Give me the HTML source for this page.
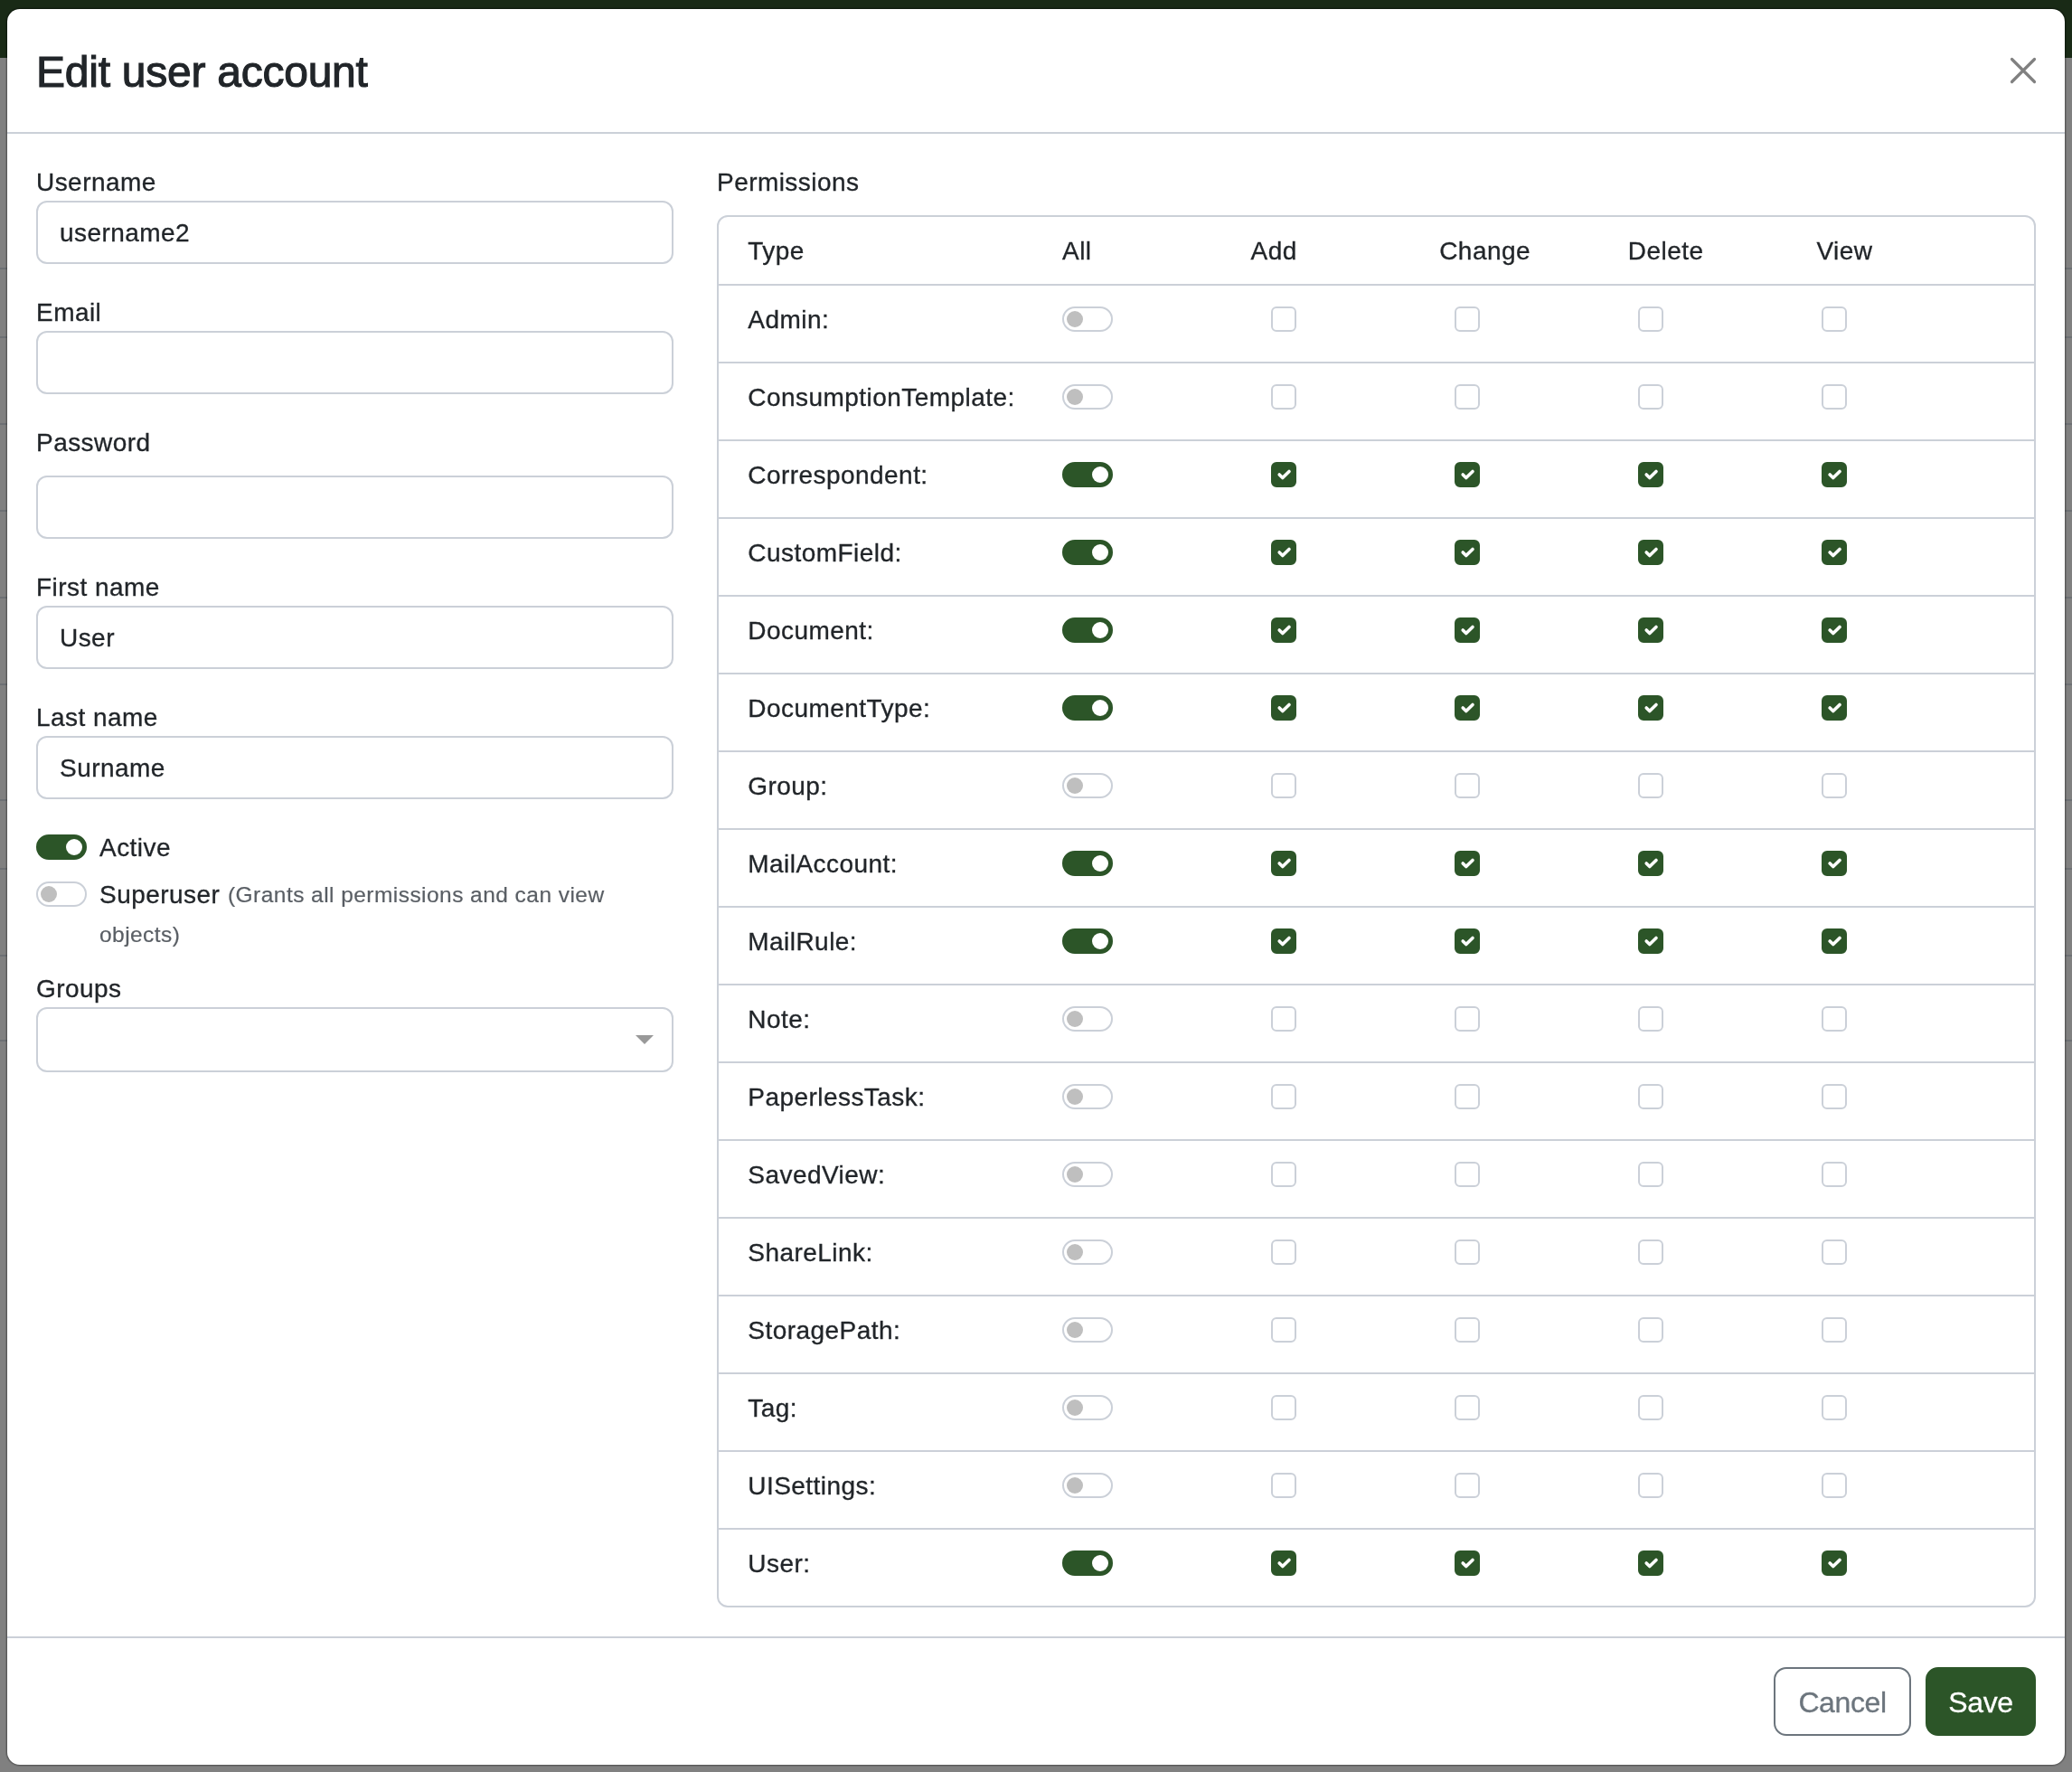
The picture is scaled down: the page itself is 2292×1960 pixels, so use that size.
<!DOCTYPE html>
<html><head><meta charset="utf-8"><style>
html,body{margin:0;padding:0;}
body{width:2292px;height:1960px;position:relative;overflow:hidden;background:#808080;font-family:"Liberation Sans", sans-serif;color:#212529;}
.top{position:absolute;left:0;top:0;width:2292px;height:64px;background:#192a16;}
.gl{position:absolute;left:0;width:2292px;height:2px;background:#6d7074;}
.modal{position:absolute;left:7px;top:9px;width:2276px;height:1942px;border:1px solid rgba(0,0,0,.2);box-shadow:0 0 0 1px rgba(0,0,0,.12);border-radius:15px;background:#fff;background-clip:padding-box;}
.abs{position:absolute;}
.t{position:absolute;font-size:28px;line-height:42px;white-space:nowrap;letter-spacing:.45px;margin-top:1px;-webkit-text-stroke:.3px #212529;}
.sm{position:absolute;font-size:24.5px;line-height:42px;white-space:nowrap;color:#595e64;letter-spacing:.45px;margin-top:.5px;-webkit-text-stroke-width:.2px;}
.title{position:absolute;font-size:48px;line-height:72px;white-space:nowrap;-webkit-text-stroke:1.1px #212529;letter-spacing:-.25px;}
.inp{position:absolute;left:40px;width:705px;height:70px;box-sizing:border-box;border:2px solid #cbd0d8;border-radius:12px;background:#fff;}
.card{box-sizing:border-box;border:2px solid #cbd0d8;border-radius:12px;}
.sw{position:absolute;width:56px;height:28px;box-sizing:border-box;border:2px solid #cbd0d8;border-radius:14px;background:#fff;}
.sw i{position:absolute;left:3px;top:3px;width:18px;height:18px;border-radius:50%;background:#bfbfbf;}
.sw.on{background:#2c5528;border-color:#2c5528;}
.sw.on i{left:auto;right:3px;background:#fff;}
.cb{position:absolute;width:28px;height:28px;box-sizing:border-box;border:2px solid #cbd0d8;border-radius:6px;background:#fff;}
.cb.on{background:#2c5528;border-color:#2c5528;}
.cb svg{position:absolute;left:0;top:0;}
.btn{position:absolute;height:76px;box-sizing:border-box;border:2px solid;border-radius:14px;font-size:32px;line-height:75px;text-align:center;white-space:nowrap;letter-spacing:-.4px;-webkit-text-stroke-width:.3px;}
.cancel{border-color:#6c757d;color:#6c757d;background:#fff;}
.save{border-color:#2c5528;background:#2c5528;color:#fff;}
</style></head><body>
<div class="top"></div>
<div class="gl" style="top:296px"></div><div class="gl" style="top:372px"></div><div class="gl" style="top:468px"></div><div class="gl" style="top:564px"></div><div class="gl" style="top:660px"></div><div class="gl" style="top:756px"></div><div class="gl" style="top:884px"></div><div class="gl" style="top:960px"></div><div class="gl" style="top:1056px"></div><div class="gl" style="top:1150px"></div>
<div class="modal"></div>
<div id="c" style="position:absolute;left:0;top:0;width:2292px;height:1960px;will-change:transform;"><div class="title" style="left:40px;top:43.5px">Edit user account</div><svg class="abs" style="left:2220px;top:60px" width="36" height="36" viewBox="0 0 36 36"><path d="M5.5 5.5 L30.5 30.5 M30.5 5.5 L5.5 30.5" stroke="#808080" stroke-width="3.2" stroke-linecap="round" fill="none"/></svg><div class="abs" style="left:8px;top:146px;width:2276px;height:2px;background:#cbd0d8"></div><div class="t" style="left:40px;top:180px;">Username</div><div class="t" style="left:40px;top:324px;">Email</div><div class="t" style="left:40px;top:468px;">Password</div><div class="t" style="left:40px;top:628px;">First name</div><div class="t" style="left:40px;top:772px;">Last name</div><div class="t" style="left:40px;top:1072px;">Groups</div><div class="inp" style="top:222px"></div><div class="t" style="left:66px;top:236px;">username2</div><div class="inp" style="top:366px"></div><div class="inp" style="top:526px"></div><div class="inp" style="top:670px"></div><div class="t" style="left:66px;top:684px;">User</div><div class="inp" style="top:814px"></div><div class="t" style="left:66px;top:828px;">Surname</div><div class="inp" style="top:1114px;height:72px"></div><svg class="abs" style="left:703px;top:1145px" width="20" height="10" viewBox="0 0 20 10"><path d="M0 0 L20 0 L10 10 Z" fill="#999"/></svg><div class="sw on" style="left:40px;top:923px"><i></i></div><div class="t" style="left:110px;top:916px;">Active</div><div class="sw" style="left:40px;top:975px"><i></i></div><div class="t" style="left:110px;top:968px;">Superuser</div><div class="sm" style="left:252px;top:968px">(Grants all permissions and can view</div><div class="sm" style="left:110px;top:1012px">objects)</div><div class="t" style="left:793px;top:180px;">Permissions</div><div class="abs card" style="left:793px;top:238px;width:1459px;height:1540px"></div><div class="t" style="left:827.3px;top:256px;">Type</div><div class="t" style="left:1175px;top:256px;">All</div><div class="t" style="left:1383.6px;top:256px;">Add</div><div class="t" style="left:1592.2px;top:256px;">Change</div><div class="t" style="left:1800.8px;top:256px;">Delete</div><div class="t" style="left:2009.4px;top:256px;">View</div><div class="abs" style="left:795px;top:314px;width:1455px;height:2px;background:#cbd0d8"></div><div class="t" style="left:827.3px;top:332px;">Admin:</div><div class="sw" style="left:1175px;top:339px"><i></i></div><div class="cb" style="left:1406px;top:339px"></div><div class="cb" style="left:1609px;top:339px"></div><div class="cb" style="left:1812px;top:339px"></div><div class="cb" style="left:2015px;top:339px"></div><div class="abs" style="left:795px;top:400px;width:1455px;height:2px;background:#cbd0d8"></div><div class="t" style="left:827.3px;top:418px;">ConsumptionTemplate:</div><div class="sw" style="left:1175px;top:425px"><i></i></div><div class="cb" style="left:1406px;top:425px"></div><div class="cb" style="left:1609px;top:425px"></div><div class="cb" style="left:1812px;top:425px"></div><div class="cb" style="left:2015px;top:425px"></div><div class="abs" style="left:795px;top:486px;width:1455px;height:2px;background:#cbd0d8"></div><div class="t" style="left:827.3px;top:504px;">Correspondent:</div><div class="sw on" style="left:1175px;top:511px"><i></i></div><div class="cb on" style="left:1406px;top:511px"><svg width="24" height="24" viewBox="0 0 20 20"><path fill="none" stroke="#fff" stroke-linecap="round" stroke-linejoin="round" stroke-width="3" d="m6 10 3 3 6-6"/></svg></div><div class="cb on" style="left:1609px;top:511px"><svg width="24" height="24" viewBox="0 0 20 20"><path fill="none" stroke="#fff" stroke-linecap="round" stroke-linejoin="round" stroke-width="3" d="m6 10 3 3 6-6"/></svg></div><div class="cb on" style="left:1812px;top:511px"><svg width="24" height="24" viewBox="0 0 20 20"><path fill="none" stroke="#fff" stroke-linecap="round" stroke-linejoin="round" stroke-width="3" d="m6 10 3 3 6-6"/></svg></div><div class="cb on" style="left:2015px;top:511px"><svg width="24" height="24" viewBox="0 0 20 20"><path fill="none" stroke="#fff" stroke-linecap="round" stroke-linejoin="round" stroke-width="3" d="m6 10 3 3 6-6"/></svg></div><div class="abs" style="left:795px;top:572px;width:1455px;height:2px;background:#cbd0d8"></div><div class="t" style="left:827.3px;top:590px;">CustomField:</div><div class="sw on" style="left:1175px;top:597px"><i></i></div><div class="cb on" style="left:1406px;top:597px"><svg width="24" height="24" viewBox="0 0 20 20"><path fill="none" stroke="#fff" stroke-linecap="round" stroke-linejoin="round" stroke-width="3" d="m6 10 3 3 6-6"/></svg></div><div class="cb on" style="left:1609px;top:597px"><svg width="24" height="24" viewBox="0 0 20 20"><path fill="none" stroke="#fff" stroke-linecap="round" stroke-linejoin="round" stroke-width="3" d="m6 10 3 3 6-6"/></svg></div><div class="cb on" style="left:1812px;top:597px"><svg width="24" height="24" viewBox="0 0 20 20"><path fill="none" stroke="#fff" stroke-linecap="round" stroke-linejoin="round" stroke-width="3" d="m6 10 3 3 6-6"/></svg></div><div class="cb on" style="left:2015px;top:597px"><svg width="24" height="24" viewBox="0 0 20 20"><path fill="none" stroke="#fff" stroke-linecap="round" stroke-linejoin="round" stroke-width="3" d="m6 10 3 3 6-6"/></svg></div><div class="abs" style="left:795px;top:658px;width:1455px;height:2px;background:#cbd0d8"></div><div class="t" style="left:827.3px;top:676px;">Document:</div><div class="sw on" style="left:1175px;top:683px"><i></i></div><div class="cb on" style="left:1406px;top:683px"><svg width="24" height="24" viewBox="0 0 20 20"><path fill="none" stroke="#fff" stroke-linecap="round" stroke-linejoin="round" stroke-width="3" d="m6 10 3 3 6-6"/></svg></div><div class="cb on" style="left:1609px;top:683px"><svg width="24" height="24" viewBox="0 0 20 20"><path fill="none" stroke="#fff" stroke-linecap="round" stroke-linejoin="round" stroke-width="3" d="m6 10 3 3 6-6"/></svg></div><div class="cb on" style="left:1812px;top:683px"><svg width="24" height="24" viewBox="0 0 20 20"><path fill="none" stroke="#fff" stroke-linecap="round" stroke-linejoin="round" stroke-width="3" d="m6 10 3 3 6-6"/></svg></div><div class="cb on" style="left:2015px;top:683px"><svg width="24" height="24" viewBox="0 0 20 20"><path fill="none" stroke="#fff" stroke-linecap="round" stroke-linejoin="round" stroke-width="3" d="m6 10 3 3 6-6"/></svg></div><div class="abs" style="left:795px;top:744px;width:1455px;height:2px;background:#cbd0d8"></div><div class="t" style="left:827.3px;top:762px;">DocumentType:</div><div class="sw on" style="left:1175px;top:769px"><i></i></div><div class="cb on" style="left:1406px;top:769px"><svg width="24" height="24" viewBox="0 0 20 20"><path fill="none" stroke="#fff" stroke-linecap="round" stroke-linejoin="round" stroke-width="3" d="m6 10 3 3 6-6"/></svg></div><div class="cb on" style="left:1609px;top:769px"><svg width="24" height="24" viewBox="0 0 20 20"><path fill="none" stroke="#fff" stroke-linecap="round" stroke-linejoin="round" stroke-width="3" d="m6 10 3 3 6-6"/></svg></div><div class="cb on" style="left:1812px;top:769px"><svg width="24" height="24" viewBox="0 0 20 20"><path fill="none" stroke="#fff" stroke-linecap="round" stroke-linejoin="round" stroke-width="3" d="m6 10 3 3 6-6"/></svg></div><div class="cb on" style="left:2015px;top:769px"><svg width="24" height="24" viewBox="0 0 20 20"><path fill="none" stroke="#fff" stroke-linecap="round" stroke-linejoin="round" stroke-width="3" d="m6 10 3 3 6-6"/></svg></div><div class="abs" style="left:795px;top:830px;width:1455px;height:2px;background:#cbd0d8"></div><div class="t" style="left:827.3px;top:848px;">Group:</div><div class="sw" style="left:1175px;top:855px"><i></i></div><div class="cb" style="left:1406px;top:855px"></div><div class="cb" style="left:1609px;top:855px"></div><div class="cb" style="left:1812px;top:855px"></div><div class="cb" style="left:2015px;top:855px"></div><div class="abs" style="left:795px;top:916px;width:1455px;height:2px;background:#cbd0d8"></div><div class="t" style="left:827.3px;top:934px;">MailAccount:</div><div class="sw on" style="left:1175px;top:941px"><i></i></div><div class="cb on" style="left:1406px;top:941px"><svg width="24" height="24" viewBox="0 0 20 20"><path fill="none" stroke="#fff" stroke-linecap="round" stroke-linejoin="round" stroke-width="3" d="m6 10 3 3 6-6"/></svg></div><div class="cb on" style="left:1609px;top:941px"><svg width="24" height="24" viewBox="0 0 20 20"><path fill="none" stroke="#fff" stroke-linecap="round" stroke-linejoin="round" stroke-width="3" d="m6 10 3 3 6-6"/></svg></div><div class="cb on" style="left:1812px;top:941px"><svg width="24" height="24" viewBox="0 0 20 20"><path fill="none" stroke="#fff" stroke-linecap="round" stroke-linejoin="round" stroke-width="3" d="m6 10 3 3 6-6"/></svg></div><div class="cb on" style="left:2015px;top:941px"><svg width="24" height="24" viewBox="0 0 20 20"><path fill="none" stroke="#fff" stroke-linecap="round" stroke-linejoin="round" stroke-width="3" d="m6 10 3 3 6-6"/></svg></div><div class="abs" style="left:795px;top:1002px;width:1455px;height:2px;background:#cbd0d8"></div><div class="t" style="left:827.3px;top:1020px;">MailRule:</div><div class="sw on" style="left:1175px;top:1027px"><i></i></div><div class="cb on" style="left:1406px;top:1027px"><svg width="24" height="24" viewBox="0 0 20 20"><path fill="none" stroke="#fff" stroke-linecap="round" stroke-linejoin="round" stroke-width="3" d="m6 10 3 3 6-6"/></svg></div><div class="cb on" style="left:1609px;top:1027px"><svg width="24" height="24" viewBox="0 0 20 20"><path fill="none" stroke="#fff" stroke-linecap="round" stroke-linejoin="round" stroke-width="3" d="m6 10 3 3 6-6"/></svg></div><div class="cb on" style="left:1812px;top:1027px"><svg width="24" height="24" viewBox="0 0 20 20"><path fill="none" stroke="#fff" stroke-linecap="round" stroke-linejoin="round" stroke-width="3" d="m6 10 3 3 6-6"/></svg></div><div class="cb on" style="left:2015px;top:1027px"><svg width="24" height="24" viewBox="0 0 20 20"><path fill="none" stroke="#fff" stroke-linecap="round" stroke-linejoin="round" stroke-width="3" d="m6 10 3 3 6-6"/></svg></div><div class="abs" style="left:795px;top:1088px;width:1455px;height:2px;background:#cbd0d8"></div><div class="t" style="left:827.3px;top:1106px;">Note:</div><div class="sw" style="left:1175px;top:1113px"><i></i></div><div class="cb" style="left:1406px;top:1113px"></div><div class="cb" style="left:1609px;top:1113px"></div><div class="cb" style="left:1812px;top:1113px"></div><div class="cb" style="left:2015px;top:1113px"></div><div class="abs" style="left:795px;top:1174px;width:1455px;height:2px;background:#cbd0d8"></div><div class="t" style="left:827.3px;top:1192px;">PaperlessTask:</div><div class="sw" style="left:1175px;top:1199px"><i></i></div><div class="cb" style="left:1406px;top:1199px"></div><div class="cb" style="left:1609px;top:1199px"></div><div class="cb" style="left:1812px;top:1199px"></div><div class="cb" style="left:2015px;top:1199px"></div><div class="abs" style="left:795px;top:1260px;width:1455px;height:2px;background:#cbd0d8"></div><div class="t" style="left:827.3px;top:1278px;">SavedView:</div><div class="sw" style="left:1175px;top:1285px"><i></i></div><div class="cb" style="left:1406px;top:1285px"></div><div class="cb" style="left:1609px;top:1285px"></div><div class="cb" style="left:1812px;top:1285px"></div><div class="cb" style="left:2015px;top:1285px"></div><div class="abs" style="left:795px;top:1346px;width:1455px;height:2px;background:#cbd0d8"></div><div class="t" style="left:827.3px;top:1364px;">ShareLink:</div><div class="sw" style="left:1175px;top:1371px"><i></i></div><div class="cb" style="left:1406px;top:1371px"></div><div class="cb" style="left:1609px;top:1371px"></div><div class="cb" style="left:1812px;top:1371px"></div><div class="cb" style="left:2015px;top:1371px"></div><div class="abs" style="left:795px;top:1432px;width:1455px;height:2px;background:#cbd0d8"></div><div class="t" style="left:827.3px;top:1450px;">StoragePath:</div><div class="sw" style="left:1175px;top:1457px"><i></i></div><div class="cb" style="left:1406px;top:1457px"></div><div class="cb" style="left:1609px;top:1457px"></div><div class="cb" style="left:1812px;top:1457px"></div><div class="cb" style="left:2015px;top:1457px"></div><div class="abs" style="left:795px;top:1518px;width:1455px;height:2px;background:#cbd0d8"></div><div class="t" style="left:827.3px;top:1536px;">Tag:</div><div class="sw" style="left:1175px;top:1543px"><i></i></div><div class="cb" style="left:1406px;top:1543px"></div><div class="cb" style="left:1609px;top:1543px"></div><div class="cb" style="left:1812px;top:1543px"></div><div class="cb" style="left:2015px;top:1543px"></div><div class="abs" style="left:795px;top:1604px;width:1455px;height:2px;background:#cbd0d8"></div><div class="t" style="left:827.3px;top:1622px;">UISettings:</div><div class="sw" style="left:1175px;top:1629px"><i></i></div><div class="cb" style="left:1406px;top:1629px"></div><div class="cb" style="left:1609px;top:1629px"></div><div class="cb" style="left:1812px;top:1629px"></div><div class="cb" style="left:2015px;top:1629px"></div><div class="abs" style="left:795px;top:1690px;width:1455px;height:2px;background:#cbd0d8"></div><div class="t" style="left:827.3px;top:1708px;">User:</div><div class="sw on" style="left:1175px;top:1715px"><i></i></div><div class="cb on" style="left:1406px;top:1715px"><svg width="24" height="24" viewBox="0 0 20 20"><path fill="none" stroke="#fff" stroke-linecap="round" stroke-linejoin="round" stroke-width="3" d="m6 10 3 3 6-6"/></svg></div><div class="cb on" style="left:1609px;top:1715px"><svg width="24" height="24" viewBox="0 0 20 20"><path fill="none" stroke="#fff" stroke-linecap="round" stroke-linejoin="round" stroke-width="3" d="m6 10 3 3 6-6"/></svg></div><div class="cb on" style="left:1812px;top:1715px"><svg width="24" height="24" viewBox="0 0 20 20"><path fill="none" stroke="#fff" stroke-linecap="round" stroke-linejoin="round" stroke-width="3" d="m6 10 3 3 6-6"/></svg></div><div class="cb on" style="left:2015px;top:1715px"><svg width="24" height="24" viewBox="0 0 20 20"><path fill="none" stroke="#fff" stroke-linecap="round" stroke-linejoin="round" stroke-width="3" d="m6 10 3 3 6-6"/></svg></div><div class="abs" style="left:8px;top:1810px;width:2276px;height:2px;background:#cbd0d8"></div><div class="btn cancel" style="left:1962px;top:1844px;width:152px">Cancel</div><div class="btn save" style="left:2130px;top:1844px;width:122px">Save</div></div>
</body></html>
